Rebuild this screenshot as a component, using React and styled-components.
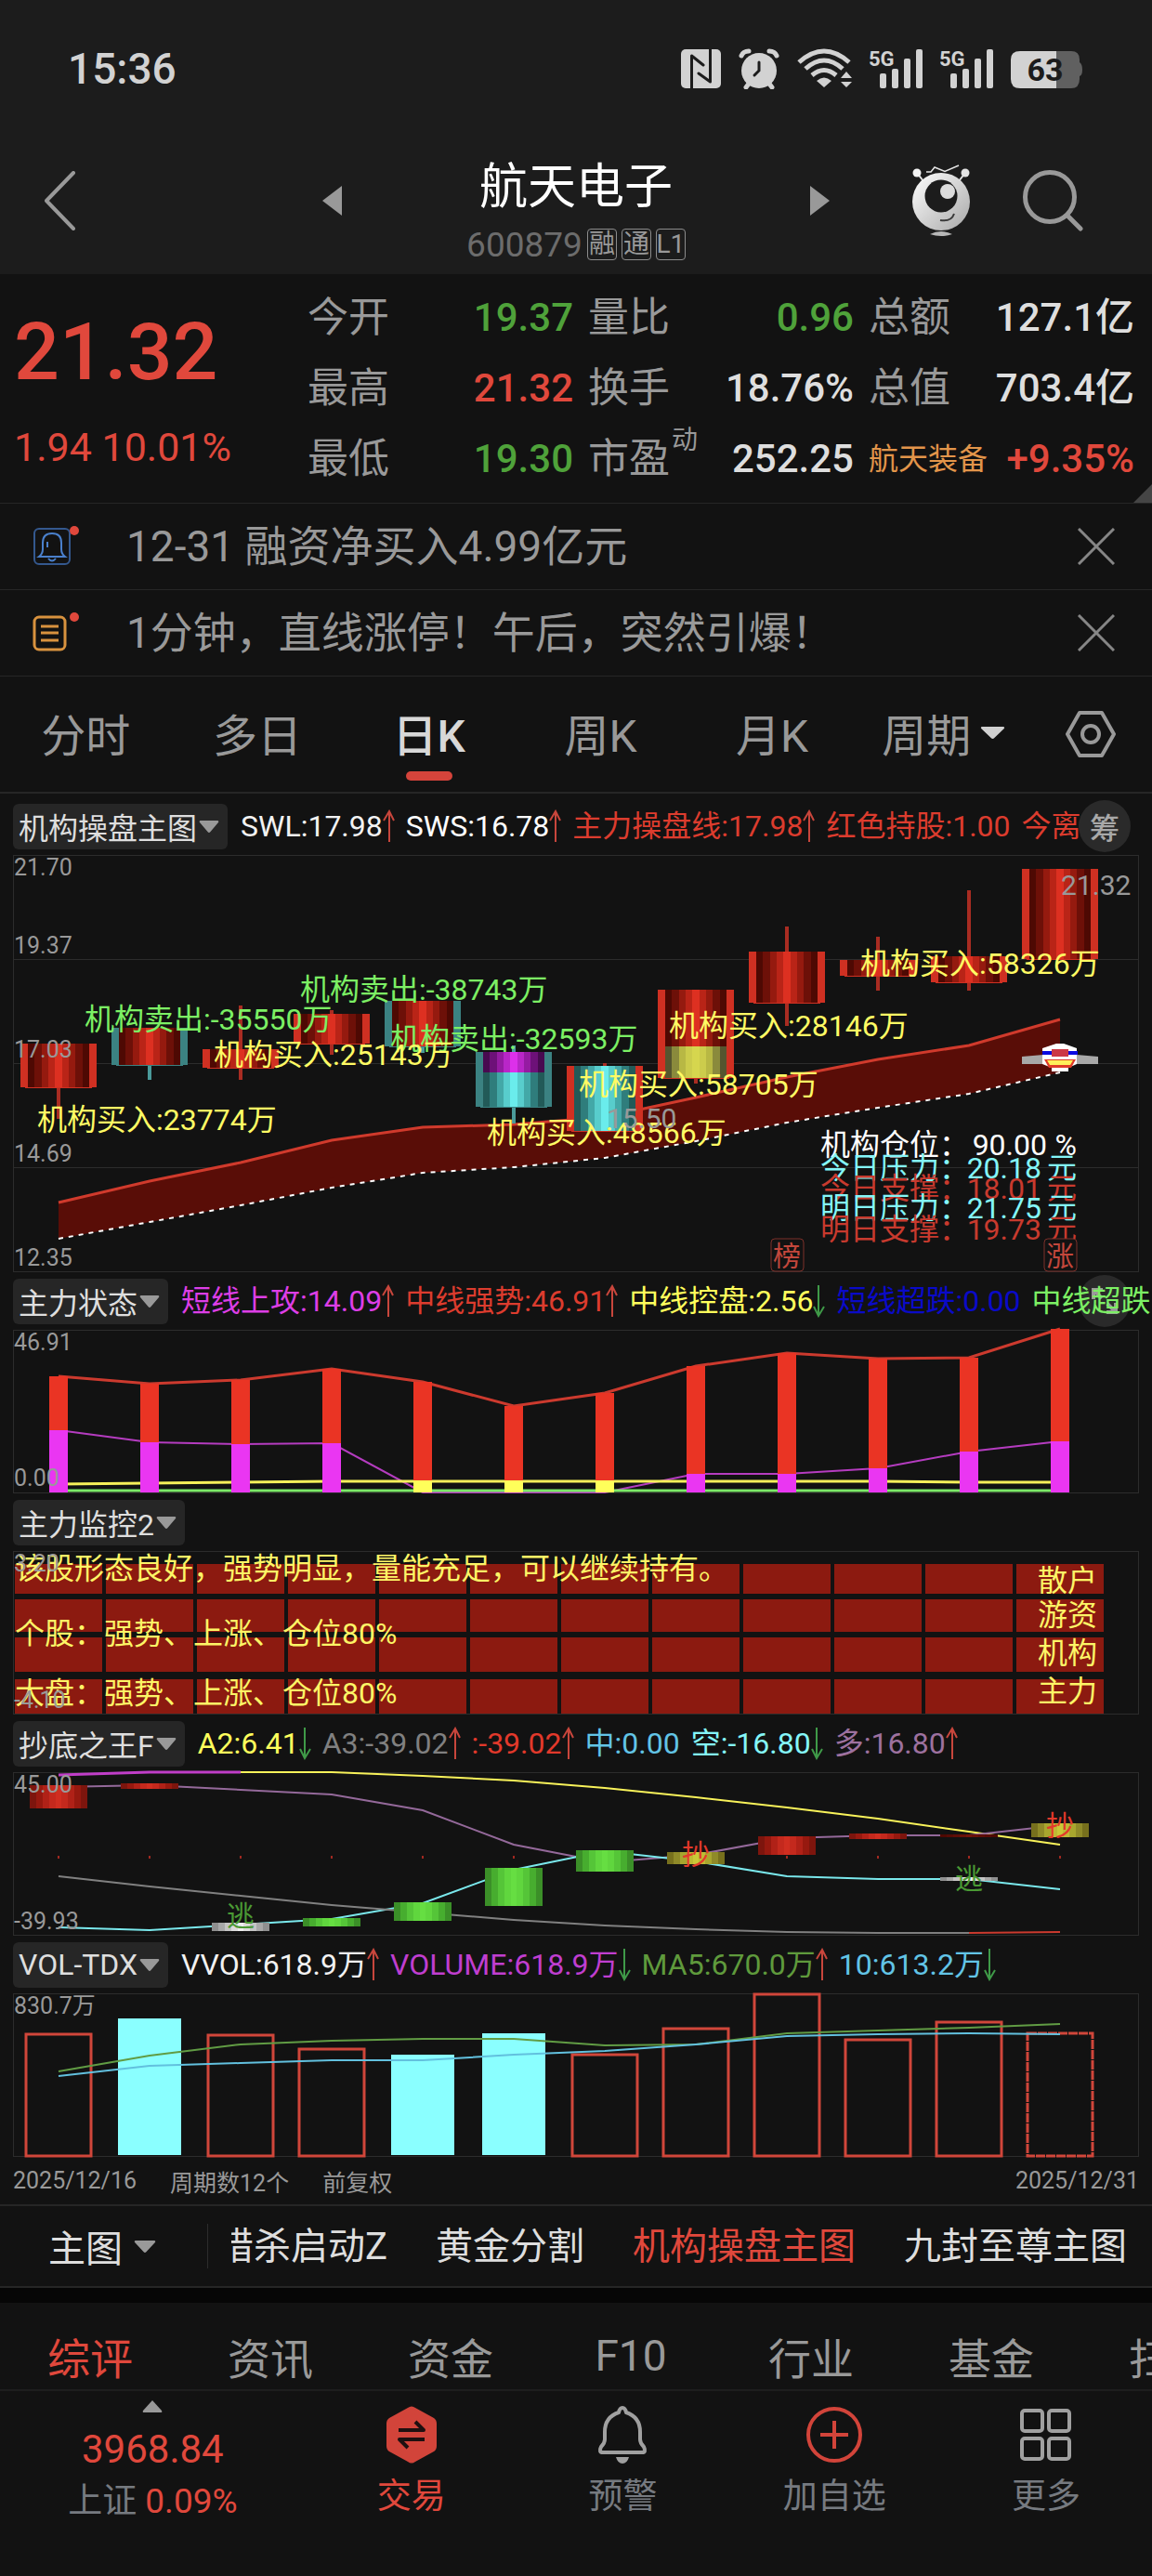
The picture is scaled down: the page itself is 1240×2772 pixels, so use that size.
import React from 'react'
import styled, { createGlobalStyle, css } from 'styled-components'

const RED = '#e0483c'
const GREEN = '#4fa23a'
const GREY = '#999999'
const WHITE = '#dedede'

// every chart shares the same twelve columns
const cx = (i) => 48 + 98 * i
const line = (ys, from = 0) => ys.map((y, i) => `${cx(i + from)},${y}`).join(' ')

const metrics = [
    { label: '今开', value: '19.37', color: GREEN },
    { label: '量比', value: '0.96', color: GREEN },
    { label: '总额', value: '127.1亿', color: WHITE },
    { label: '最高', value: '21.32', color: RED },
    { label: '换手', value: '18.76%', color: WHITE },
    { label: '总值', value: '703.4亿', color: WHITE },
    { label: '最低', value: '19.30', color: GREEN },
    { label: '市盈', sup: '动', value: '252.25', color: WHITE },
    { label: '航天装备', sector: true, value: '+9.35%', color: RED },
]

const legends = {
    main: [
        { text: 'SWL:17.98', color: '#f2f2f2', dir: 'up' },
        { text: 'SWS:16.78', color: '#ffffff', dir: 'up' },
        { text: '主力操盘线:17.98', color: '#dc3c2e', dir: 'up' },
        { text: '红色持股:1.00', color: '#dc3c2e' },
        { text: '今离', color: '#dc3c2e' },
    ],
    state: [
        { text: '短线上攻:14.09', color: '#dd3ee6', dir: 'up' },
        { text: '中线强势:46.91', color: '#dc3c2e', dir: 'up' },
        { text: '中线控盘:2.56', color: '#ffff5c', dir: 'down' },
        { text: '短线超跌:0.00', color: '#0a0ac8' },
        { text: '中线超跌:0.00', color: '#7cf064' },
    ],
    bottom: [
        { text: 'A2:6.41', color: '#ffff5c', dir: 'down' },
        { text: 'A3:-39.02', color: '#808080', dir: 'up' },
        { text: ':-39.02', color: '#e2392b', dir: 'up' },
        { text: '中:0.00', color: '#62c4e6' },
        { text: '空:-16.80', color: '#84f6f8', dir: 'down' },
        { text: '多:16.80', color: '#9d719f', dir: 'up' },
    ],
    vol: [
        { text: 'VVOL:618.9万', color: '#f2f2f2', dir: 'up' },
        { text: 'VOLUME:618.9万', color: '#c03ed0', dir: 'down' },
        { text: 'MA5:670.0万', color: '#5f9a3c', dir: 'up' },
        { text: '10:613.2万', color: '#62c4e6', dir: 'down' },
    ],
}

const ramps = {
    red: ['#4e0903', '#6d1008', '#951a0f', '#b92417', '#dd3021'],
    cyan: ['#225a58', '#2f7d7c', '#43a8a7', '#58cdcc', '#6aecec'],
    purple: ['#480a50', '#6d1178', '#951ba2', '#b926c8', '#dd30ea'],
    olive: ['#55552f', '#8a8a3c', '#b8b844', '#cccc4c', '#d6d64e'],
    ember: ['#7d150d', '#97190f', '#b02117', '#c4291d', '#d02e20'],
    maroon: ['#4e0903', '#560b05', '#5e0e07', '#681108', '#72140a'],
    green: ['#3b8f28', '#47ad2f', '#55c538', '#60d63e', '#66de42'],
    gold: ['#77701d', '#8f8a28', '#a8a62e', '#bdbb34', '#cac938'],
    silver: ['#8f8f8f', '#a8a8a8', '#c4c4c4', '#dcdcdc', '#eeeeee'],
}

const candles = [
    { body: [202, 249], wick: [249, 283] },
    { body: [185, 225], wick: [225, 241], cold: true },
    { body: [208, 228], wick: [161, 241] },
    { body: [170, 202], wick: [166, 214] },
    { body: [156, 205], wick: [205, 212], cold: true },
    { body: [211, 270], wick: [204, 288], cold: true, fill: 'cyan', part: ['purple', 211, 233] },
    { body: [226, 296], wick: [223, 226], fill: 'cyan' },
    { body: [144, 239], wick: [239, 245], part: ['olive', 205, 239] },
    { body: [103, 158], wick: [76, 183] },
    { body: [112, 129], wick: [87, 145] },
    { body: [108, 136], wick: [37, 145] },
    { body: [14, 111], wick: [111, 111] },
]

const trendTop = [373, 350, 330, 306, 292, 289, 281, 260, 238, 219, 204, 176]
const trendLow = [412, 394, 376, 357, 341, 335, 325, 307, 287, 271, 256, 233]

const flows = [
    [308, 155, '机构卖出:-38743万'],
    [76, 187, '机构卖出:-35550万'],
    [405, 208, '机构卖出:-32593万'],
    [25, 295, '机构买入:23774万'],
    [215, 225, '机构买入:25143万'],
    [509, 309, '机构买入:48566万'],
    [608, 257, '机构买入:58705万'],
    [705, 194, '机构买入:28146万'],
    [911, 127, '机构买入:58326万'],
]

const position = [
    ['机构仓位', '90.00', '%', '#ffffff', 322],
    ['今日压力', '20.18', '元', '#84f6f8', 347],
    ['今日支撑', '18.01', '元', '#c83a2e', 369],
    ['明日压力', '21.75', '元', '#84f6f8', 390],
    ['明日支撑', '19.73', '元', '#c83a2e', 413],
]

const strong = [49, 57, 53, 41, 55, 81, 67, 38, 24, 30, 29, -2]
const short = [107, 120, 122, 121, 174, 174, 174, 154, 154, 148, 130, 119]

const monitorRows = [[13, 32, '散户', 42], [51, 35, '游资', 79], [92, 37, '机构', 120], [137, 37, '主力', 161]]

const kingBars = [
    [0, 13, 38, 'ember'], [1, 11, 17, 'ember'], [2, 161, 170, 'silver'], [3, 156, 165, 'green'],
    [4, 139, 159, 'green'], [5, 102, 143, 'green'], [6, 83, 106, 'green'], [7, 85, 98, 'gold'],
    [8, 68, 88, 'ember'], [9, 65, 71, 'ember'], [10, 66, 69, 'maroon'], [10, 112, 116, 'silver'],
    [11, 54, 69, 'gold'],
]

const volumes = [42, 26, 43, 58, 65, 42, 64, 36, -1, 48, 29, 41]
const coldDays = [1, 4, 5]

const Ramps = () => (
    <svg width="0" height="0" style={{ position: 'absolute' }} aria-hidden="true">
        <defs>
            {Object.entries(ramps).map(([name, ramp]) => {
                const stripes = [...ramp, ...ramp.slice(0, 4).reverse()]
                return (
                    <linearGradient id={name} key={name}>
                        {stripes.map((color, i) => (
                            <React.Fragment key={i}>
                                <stop offset={i / 9} stopColor={color} />
                                <stop offset={(i + 1) / 9} stopColor={color} />
                            </React.Fragment>
                        ))}
                    </linearGradient>
                )
            })}
        </defs>
    </svg>
)

const Signal = () => (
    <svg width="57" height="44" viewBox="0 0 57 44" fill="#d2d2d2">
        <text x="-1" y="19" fontSize="22" fontWeight="700" fontFamily="Roboto">5G</text>
        <rect x="11" y="27" width="7" height="16" rx="2" />
        <rect x="24" y="22" width="7" height="21" rx="2" />
        <rect x="37" y="11" width="7" height="32" rx="2" />
        <rect x="50" y="1" width="7" height="42" rx="2" />
    </svg>
)

const StatusIcons = () => (
    <Icons>
        <svg width="43" height="44" viewBox="0 0 43 44">
            <rect x="0" y="1" width="43" height="42" rx="5" fill="#d2d2d2" />
            <g stroke="#1c1c1c" strokeWidth="3" fill="none" strokeLinecap="round" strokeLinejoin="round">
                <path d="M11.500 43V8L24 18M31.500 1V36L19 27" />
            </g>
        </svg>
        <svg width="44" height="44" viewBox="0 0 44 44">
            <g stroke="#d2d2d2" strokeWidth="5" strokeLinecap="round" fill="none">
                <path d="M3 8Q5 3 11 3M33 3Q39 3 41 8M11 38L8 42M33 38L36 42" />
            </g>
            <circle cx="22" cy="24" r="19" fill="#d2d2d2" />
            <path d="M22 15V24L17 29" stroke="#1c1c1c" strokeWidth="3" fill="none" strokeLinecap="round" />
        </svg>
        <svg width="59" height="44" viewBox="0 0 59 44">
            <g stroke="#d2d2d2" strokeWidth="5" fill="none">
                <path d="M2 15Q29 -9 56 15M9 22Q29 4 49 22M16 29Q29 18 42 29" />
            </g>
            <path d="M21 35Q29 28 37 35L29 42ZM47 32L53 25L59 32ZM47 36H59L53 42Z" fill="#d2d2d2" />
        </svg>
        <Signal />
        <Signal />
        <svg width="77" height="44" viewBox="0 0 77 44">
            <path d="M49 3H65Q74 3 74 12V15Q77 17 77 23T74 30V33Q74 43 65 43H49Z" fill="#606060" />
            <path d="M49 3H10Q0 3 0 12V33Q0 43 10 43H49Z" fill="#d2d2d2" />
            <text x="37" y="35" textAnchor="middle" fontSize="34" fontWeight="700" fontFamily="Roboto" fill="#1c1c1c">63</text>
        </svg>
    </Icons>
)

const Robot = () => (
    <svg width="62" height="78" viewBox="0 0 62 78">
        <defs>
            <linearGradient id="shell" x1="0" y1="0" x2="1" y2="1">
                <stop offset="0" stopColor="#ffffff" />
                <stop offset="1" stopColor="#a8a8a8" />
            </linearGradient>
        </defs>
        <g stroke="#e4e4e4" fill="none">
            <path d="M5 9L12 18M57 9L50 18" strokeWidth="2" />
            <path d="M15 8H20L24 3L35 7.500L50 1" strokeWidth="1.500" />
        </g>
        <circle cx="5" cy="9" r="4.500" fill="#f4f4f4" />
        <circle cx="57" cy="9" r="4.500" fill="#e4e4e4" />
        <circle cx="31" cy="40" r="31" fill="url(#shell)" />
        <circle cx="31" cy="34" r="17.500" fill="#1c1c1c" />
        <circle cx="38" cy="29" r="8" fill="#dcdcdc" />
        <path d="M30 60Q42 62 45 53" stroke="#3a3a3a" strokeWidth="2" fill="none" />
        <path d="M19 75Q31 69 43 75Q31 79 19 75Z" fill="#b8b8b8" />
    </svg>
)

const Arrow = ({ dir }) => (
    <svg width="13" height="36" viewBox="0 0 13 36" fill="none" stroke={dir === 'up' ? '#c8463c' : '#3f9a48'} strokeWidth="2">
        {dir === 'up' ? <path d="M7 35V3M1 12L7 2L12 12" /> : <path d="M6 1V33M1 24L6 34L12 24" />}
    </svg>
)

const Caret = ({ color = '#999999', width = 22 }) => (
    <svg width={width} height="13" viewBox="0 0 22 13" preserveAspectRatio="none">
        <path d="M2 0H20Q22 0 21 2L12.500 12Q11 14 9.500 12L1 2Q0 0 2 0Z" fill={color} />
    </svg>
)

const Legend = ({ items, clipped }) => (
    <Values $clipped={clipped}>
        {items.map((item) => (
            <Value key={item.text} $color={item.color}>
                {item.text}
                {item.dir && <Arrow dir={item.dir} />}
            </Value>
        ))}
    </Values>
)

const Plot = ({ height, scale, children }) => (
    <Frame>
        <svg viewBox={`0 0 1210 ${height}`}>
            {children}
            {scale.map(([text, y]) => (
                <text key={text} x="0" y={y} fontSize="25" fill="#999999">{text}</text>
            ))}
        </svg>
    </Frame>
)

const Candle = ({ i, body, wick, cold, fill = 'red', part }) => {
    const [top, bottom] = body
    const edge = cold ? '#3b8282' : '#cf3022'
    const thin = cold ? '#4a9a9a' : '#a92c22'
    return (
        <g>
            <rect x={cx(i) - 2} y={wick[0]} width="4" height={wick[1] - wick[0]} fill={thin} />
            <rect x={cx(i) - 41} y={top} width="82" height={bottom - top} fill={edge} />
            <rect x={cx(i) - 33} y={top} width="66" height={bottom - top} fill={`url(#${fill})`} />
            {part && <rect x={cx(i) - 33} y={part[1]} width="66" height={part[2] - part[1]} fill={`url(#${part[0]})`} />}
            <rect x={cx(i) - 36} y={bottom} width="72" height="1" fill={edge} />
        </g>
    )
}

const Ship = () => (
    <g>
        <path d="M1085 216L1108 214V224H1085ZM1167 216L1144 214V224H1167Z" fill="#a8a8a8" />
        <path d="M1107 207L1122 202H1130L1144 207V224L1135 228V232H1117V228L1107 224Z" fill="#ffffff" />
        <rect x="1107" y="210" width="38" height="4" fill="#0a0ae0" />
        <rect x="1117" y="208" width="18" height="8" fill="#cc3846" />
        <path d="M1109 219H1143L1138 228H1114Z" fill="#e03a28" />
        <path d="M1112 220H1140L1137 225H1115Z" fill="#fff05a" />
    </g>
)

const MainPlot = () => (
    <Plot height={447} scale={[['21.70', 21], ['19.37', 105], ['17.03', 217], ['14.69', 329], ['12.35', 441]]}>
        <path d="M0 111.500H1210M0 223.500H1210M0 335.500H1210" stroke="#2c2c2c" />
        <polygon points={`${line(trendTop)} ${line(trendLow).split(' ').reverse().join(' ')}`} fill="#590d07" />
        <polyline points={line(trendTop)} fill="none" stroke="#d03a2c" strokeWidth="3" />
        <polyline points={line(trendLow)} fill="none" stroke="#ffffff" strokeWidth="2" strokeDasharray="5 6" />
        {candles.map((c, i) => <Candle key={i} i={i} {...c} />)}
        <Ship />
        <g fontSize="32">
            {flows.map(([x, y, text]) => (
                <text key={text} x={x} y={y} fill={text.includes('卖出') ? '#7cf064' : '#fffb64'}>{text}</text>
            ))}
            {position.map(([label, value, unit, color, y]) => (
                <g key={label} fill={color}>
                    <text x="868" y={y}>{label}：</text>
                    <text x={unit === '%' ? 1112 : 1106} y={y} textAnchor="end">{value}</text>
                    <text x="1144" y={y} textAnchor="end">{unit}</text>
                </g>
            ))}
        </g>
        <g fontSize="30" fill="#999999">
            <text x="1127" y="42">21.32</text>
            <text x="638" y="293">15.50</text>
        </g>
        {[['榜', 832], ['涨', 1126]].map(([text, x]) => (
            <g key={text}>
                <rect x={x - 17} y="412" width="35" height="35" rx="4" fill="#121212" stroke="#7c302a" />
                <text x={x} y="441" fontSize="30" textAnchor="middle" fill="#c2473c">{text}</text>
            </g>
        ))}
    </Plot>
)

const StatePlot = () => (
    <Plot height={174} scale={[['46.91', 21], ['0.00', 167]]}>
        <g fill="none">
            <polyline points={line(strong)} stroke="#cc3a2e" strokeWidth="3" />
            <polyline points={line(short)} stroke="#b53cc0" strokeWidth="2" />
            <polyline points={line([165, 164, 163, 162, 162, 162, 162, 162, 162, 162, 163, 163])} stroke="#f6f05a" strokeWidth="3" />
            <polyline points={line(Array(12).fill(172))} stroke="#7ce868" strokeWidth="3" />
        </g>
        {strong.map((y, i) => (
            <g key={i}>
                <rect x={cx(i) - 10} y={y} width="20" height={174 - y} fill="#ea3424" />
                {short[i] < 174
                    ? <rect x={cx(i) - 10} y={short[i]} width="20" height={174 - short[i]} fill="#ea36f2" />
                    : <rect x={cx(i) - 10} y="161" width="20" height="13" fill="#ffff5a" />}
            </g>
        ))}
    </Plot>
)

const MonitorPlot = () => (
    <Plot height={174} scale={[['3.20', 21], ['-4.10', 168]]}>
        {monitorRows.map(([y, h, name, base]) => (
            <g key={name}>
                {candles.map((c, i) => <rect key={i} x={1 + 98 * i} y={y} width="94" height={h} fill="#8c1a10" />)}
                <text x="1102" y={base} fontSize="32" fill="#fdf566">{name}</text>
            </g>
        ))}
        <g fontSize="32" fill="#fdf566">
            <text x="1" y="29">该股形态良好，强势明显，量能充足，可以继续持有。</text>
            <text x="1" y="99">个股：强势、上涨、仓位80%</text>
            <text x="1" y="163">大盘：强势、上涨、仓位80%</text>
        </g>
    </Plot>
)

const KingPlot = () => (
    <Plot height={174} scale={[['45.00', 21], ['-39.93', 168]]}>
        <g fill="none" strokeWidth="2">
            <polyline points={line([-1, -1, 3, 8, 16, 26, 37, 49, 63, 77], 2)} stroke="#f8f25a" />
            <polyline points={line([2, -1, -1])} stroke="#c03ec8" strokeWidth="3" />
            <polyline points={line([15, 13, 18, 23, 40, 77, 96, 88, 70, 67, 67, 56])} stroke="#94699a" />
            <polyline points={line([166, 169, 163, 157, 140, 104, 84, 95, 111, 114, 114, 125])} stroke="#7ae8ec" />
            <polyline points={line([111, 122, 132, 142, 150, 158, 164, 168, 171, 172, 172])} stroke="#808080" />
            <polyline points={line([172, 171], 10)} stroke="#cc3a2e" />
        </g>
        {candles.map((c, i) => <rect key={i} x={cx(i) - 1} y="89" width="2" height="3" fill="#a02820" />)}
        {kingBars.map(([i, top, bottom, fill]) => (
            <rect key={`${i}${top}`} x={cx(i) - 31} y={top} width="62" height={bottom - top} fill={`url(#${fill})`} />
        ))}
        {[[2, 164, '逃'], [7, 98, '抄'], [10, 124, '逃'], [11, 67, '抄']].map(([i, y, text]) => (
            <text key={i} x={cx(i)} y={y} fontSize="30" textAnchor="middle" fill={text === '逃' ? '#4a9a34' : '#e2392b'}>{text}</text>
        ))}
    </Plot>
)

const VolumePlot = () => (
    <Plot height={174} scale={[['830.7万', 21]]}>
        {volumes.map((y, i) => coldDays.includes(i)
            ? <rect key={i} x={cx(i) - 34} y={y} width="68" height={173 - y} fill="#8affff" />
            : <rect key={i} x={cx(i) - 35} y={y + 1} width="70" height={173 - y} fill="none" stroke="#d0463a" strokeWidth="3"
                strokeDasharray={i === 11 ? '10 1' : undefined} />)}
        <g fill="none" strokeWidth="2">
            <polyline points={line([83, 66, 54, 50, 48, 48, 55, 54, 42, 39, 36, 32])} stroke="#619c44" />
            <polyline points={line([88, 77, 74, 71, 71, 65, 61, 54, 45, 43, 42, 43])} stroke="#62c0de" />
        </g>
    </Plot>
)

const App = () => {
    return (
        <Page>
            <GlobalStyle />
            <Ramps />
            <Header>
                <StatusBar>
                    <time>15:36</time>
                    <StatusIcons />
                </StatusBar>
                <TitleBar>
                    <IconButton aria-label="返回">
                        <svg width="34" height="64" viewBox="0 0 34 64" fill="none" stroke={GREY} strokeWidth="4" strokeLinecap="round" strokeLinejoin="round">
                            <path d="M31 2L2 32L31 62" />
                        </svg>
                    </IconButton>
                    <Stock>
                        <IconButton aria-label="上一只">
                            <svg width="21" height="32" viewBox="0 0 21 32"><path d="M21 0V32L0 16Z" fill={GREY} /></svg>
                        </IconButton>
                        <Name>
                            <h1>航天电子</h1>
                            <Code>
                                600879
                                <Tag>融</Tag>
                                <Tag>通</Tag>
                                <Tag>L1</Tag>
                            </Code>
                        </Name>
                        <IconButton aria-label="下一只">
                            <svg width="21" height="32" viewBox="0 0 21 32"><path d="M0 0V32L21 16Z" fill={GREY} /></svg>
                        </IconButton>
                    </Stock>
                    <Tools>
                        <IconButton aria-label="智能助手"><Robot /></IconButton>
                        <IconButton aria-label="搜索">
                            <svg width="65" height="66" viewBox="0 0 65 66" fill="none" stroke={GREY}>
                                <circle cx="29" cy="29" r="26.500" strokeWidth="5" />
                                <path d="M49 50L62 63" strokeWidth="5" strokeLinecap="round" />
                            </svg>
                        </IconButton>
                    </Tools>
                </TitleBar>
            </Header>

            <Quote>
                <Price>
                    <strong>21.32</strong>
                    <span>1.94 10.01%</span>
                </Price>
                <Metrics>
                    {metrics.map((m) => (
                        <Metric key={m.label}>
                            <MetricLabel $sector={m.sector}>{m.label}{m.sup && <sup>{m.sup}</sup>}</MetricLabel>
                            <MetricValue $color={m.color}>{m.value}</MetricValue>
                        </Metric>
                    ))}
                </Metrics>
                <Corner />
            </Quote>

            <Notice>
                <svg width="52" height="46" viewBox="0 0 52 46" fill="none" stroke="#4a80cc" strokeWidth="2">
                    <rect x="2" y="4" width="38" height="38" rx="5" stroke="#34588e" />
                    <path d="M7 34Q11 31 11 26V19Q11 9 21 9T31 19V26Q31 31 35 34ZM17 36Q21 41 25 36M16 18V24" />
                    <circle cx="45" cy="6" r="5" fill="#e0483c" stroke="none" />
                </svg>
                <p>12-31 融资净买入4.99亿元</p>
                <CloseButton />
            </Notice>
            <Notice>
                <svg width="52" height="46" viewBox="0 0 52 46" fill="none" stroke="#d8923e" strokeWidth="3">
                    <rect x="2" y="6" width="33" height="35" rx="5" />
                    <path d="M9 16H28M9 23H28M9 31H28" />
                    <circle cx="45" cy="6" r="5" fill="#e0483c" stroke="none" />
                </svg>
                <p>1分钟，直线涨停！午后，突然引爆！</p>
                <CloseButton />
            </Notice>

            <Periods>
                <Period>分时</Period>
                <Period>多日</Period>
                <Period $active>日K</Period>
                <Period>周K</Period>
                <Period>月K</Period>
                <Period>周期<Caret color="#d0d0d0" width={27} /></Period>
                <IconButton aria-label="设置">
                    <svg width="54" height="50" viewBox="0 0 54 50" fill="none" stroke={GREY} strokeWidth="4" strokeLinejoin="round">
                        <path d="M15 2H39L52 25L39 48H15L2 25Z" />
                        <circle cx="27" cy="25" r="9" />
                    </svg>
                </IconButton>
            </Periods>

            <Charts>
                <ChartHead>
                    <Picker>机构操盘主图<Caret /></Picker>
                    <Legend items={legends.main} clipped />
                    <Round>筹</Round>
                </ChartHead>
                <MainPlot />
                <ChartHead>
                    <Picker>主力状态<Caret /></Picker>
                    <Legend items={legends.state} />
                    <Round aria-label="展开">
                        <svg width="28" height="28" viewBox="0 0 28 28" fill="none" stroke="#9a9a9a" strokeWidth="4">
                            <path d="M2 12V2H12M2 2L11 11M26 16V26H16M26 26L17 17" />
                        </svg>
                    </Round>
                </ChartHead>
                <StatePlot />
                <ChartHead>
                    <Picker>主力监控2<Caret /></Picker>
                </ChartHead>
                <MonitorPlot />
                <ChartHead>
                    <Picker>抄底之王F<Caret /></Picker>
                    <Legend items={legends.bottom} />
                </ChartHead>
                <KingPlot />
                <ChartHead>
                    <Picker>VOL-TDX<Caret /></Picker>
                    <Legend items={legends.vol} />
                </ChartHead>
                <VolumePlot />
                <Dates>
                    <span>2025/12/16</span>
                    <span>周期数12个</span>
                    <span>前复权</span>
                    <span>2025/12/31</span>
                </Dates>
            </Charts>

            <Strategies>
                <StrategyMenu>主图<Caret width={24} /></StrategyMenu>
                <StrategyList>
                    <Strategy>猎杀启动Z</Strategy>
                    <Strategy>黄金分割</Strategy>
                    <Strategy $active>机构操盘主图</Strategy>
                    <Strategy>九封至尊主图</Strategy>
                </StrategyList>
            </Strategies>

            <Sections>
                {['综评', '资讯', '资金', 'F10', '行业', '基金', '扫雷'].map((name, i) => (
                    <Section key={name} $active={i === 0}>{name}</Section>
                ))}
            </Sections>

            <BottomNav>
                <IndexButton>
                    <svg width="22" height="13" viewBox="0 0 22 13"><path d="M11 0L21 11Q22 13 20 13H2Q0 13 1 11Z" fill={GREY} /></svg>
                    <strong>3968.84</strong>
                    <span>上证 <em>0.09%</em></span>
                </IndexButton>
                <NavButton $active>
                    <svg width="62" height="62" viewBox="0 0 62 62">
                        <path d="M27 2Q31 -1 35 2L55 13Q58 15 58 19V43Q58 47 55 49L35 60Q31 63 27 60L7 49Q4 47 4 43V19Q4 15 7 13Z" fill="#d2443a" />
                        <path d="M17 26H44L35 17M45 36H18L27 45" fill="none" stroke="#1e1010" strokeWidth="4" strokeLinejoin="round" />
                    </svg>
                    交易
                </NavButton>
                <NavButton>
                    <svg width="62" height="62" viewBox="0 0 62 62" fill="none" stroke="#a0a0a0" strokeWidth="4" strokeLinejoin="round">
                        <path d="M31 2Q28 2 27 7Q12 12 12 28V36Q12 40 8 44Q5 50 10 50H52Q57 50 54 44Q50 40 50 36V28Q50 12 35 7Q34 2 31 2Z" />
                        <path d="M24 55H38Q36 62 31 62T24 55Z" fill="#a0a0a0" stroke="none" />
                    </svg>
                    预警
                </NavButton>
                <NavButton>
                    <svg width="62" height="62" viewBox="0 0 62 62" fill="none" stroke="#d2443a" strokeWidth="4">
                        <circle cx="31" cy="31" r="28" />
                        <path d="M31 16V46M16 31H46" />
                    </svg>
                    加自选
                </NavButton>
                <NavButton>
                    <svg width="62" height="62" viewBox="0 0 62 62" fill="none" stroke="#a0a0a0" strokeWidth="4">
                        <rect x="5" y="5" width="22" height="22" rx="3" />
                        <rect x="34" y="5" width="22" height="22" rx="3" />
                        <rect x="5" y="35" width="22" height="22" rx="3" />
                        <rect x="34" y="35" width="22" height="22" rx="3" />
                    </svg>
                    更多
                </NavButton>
            </BottomNav>
        </Page>
    )
}

const CloseButton = () => (
    <IconButton aria-label="关闭">
        <svg width="40" height="40" viewBox="0 0 40 40" stroke="#868686" strokeWidth="3">
            <path d="M1 1L39 39M39 1L1 39" />
        </svg>
    </IconButton>
)

const GlobalStyle = createGlobalStyle`
    * {
        box-sizing: border-box;
    }

    body {
        margin: 0;
        background: #121212;
    }

    button {
        padding: 0;
        border: 0;
        background: none;
        color: inherit;
        font: inherit;
        white-space: nowrap;
        cursor: pointer;
    }

    svg {
        display: block;
        flex: none;
    }
`

const Page = styled.div`
    min-height: 100vh;
    overflow: hidden;
    background: #121212;
    color: ${GREY};
    font-family: Roboto, 'Noto Sans CJK SC', sans-serif;
`

const Header = styled.header`
    padding-bottom: 11px;
    background: #1c1c1c;
`

const StatusBar = styled.div`
    display: flex;
    align-items: center;
    justify-content: space-between;
    height: 148px;
    padding: 0 75px 0 73px;
    color: #d2d2d2;
    font-size: 46px;
    font-weight: 500;
`

const Icons = styled.div`
    display: flex;
    gap: 19px;
`

const TitleBar = styled.div`
    display: grid;
    grid-template-columns: 1fr 546px 1fr;
    align-items: center;
    height: 136px;

    > button {
        justify-self: start;
        padding-left: 48px;
    }
`

const Stock = styled.div`
    display: flex;
    align-items: center;
    justify-content: space-between;
`

const Name = styled.div`
    padding-top: 18px;
    text-align: center;

    h1 {
        margin: 0 0 12px;
        color: #ffffff;
        font-size: 52px;
        font-weight: 400;
        line-height: 64px;
    }
`

const Code = styled.div`
    display: flex;
    align-items: center;
    justify-content: center;
    gap: 5px;
    height: 34px;
    color: #6c6c6c;
    font-size: 37px;
`

const Tag = styled.span`
    display: flex;
    justify-content: center;
    width: 32px;
    height: 34px;
    border: 1px solid #8c8c8c;
    border-radius: 4px;
    color: ${GREY};
    font-size: 28px;
    line-height: 32px;
`

const Tools = styled.div`
    display: flex;
    align-items: center;
    justify-content: flex-end;
    gap: 57px;
    padding-right: 74px;
`

const IconButton = styled.button`
    display: flex;
    align-items: center;
    justify-content: center;
`

const Quote = styled.section`
    position: relative;
    display: grid;
    grid-template-columns: 316fr 890fr;
    padding: 9px 19px 9px 15px;
    border-bottom: 1px solid #262626;
`

const Price = styled.div`
    display: flex;
    flex-direction: column;
    gap: 32px;
    padding-top: 29px;
    color: ${RED};

    strong {
        font-size: 86px;
        font-weight: 500;
        line-height: 92px;
    }

    span {
        font-size: 43px;
        line-height: 48px;
    }
`

const Metrics = styled.div`
    display: grid;
    grid-template-columns: repeat(3, 1fr);
    grid-auto-rows: 76px;
    column-gap: 16px;
`

const Metric = styled.div`
    display: flex;
    align-items: center;
    justify-content: space-between;
    white-space: nowrap;
`

const MetricLabel = styled.span`
    display: flex;
    font-size: 44px;
    line-height: 64px;

    ${(props) => props.$sector && css`
        color: #e2954a;
        font-size: 32px;
    `}

    sup {
        padding-left: 2px;
        font-size: 28px;
        line-height: 24px;
    }
`

const MetricValue = styled.span`
    color: ${(props) => props.$color};
    font-size: 42px;
    font-weight: 500;
    line-height: 64px;
`

const Corner = styled.i`
    position: absolute;
    right: 0;
    bottom: 0;
    border-bottom: 20px solid #454545;
    border-left: 20px solid transparent;
`

const Notice = styled.div`
    display: grid;
    grid-template-columns: 101px 1fr 40px;
    align-items: center;
    height: 93px;
    padding: 0 40px 0 35px;
    border-bottom: 1px solid #262626;

    p {
        margin: 0;
        font-size: 46px;
        line-height: 64px;
    }
`

const Periods = styled.nav`
    display: grid;
    grid-template-columns: repeat(6, 185fr) 132fr;
    height: 126px;
    border-bottom: 2px solid #262626;
`

const Period = styled.button`
    position: relative;
    display: flex;
    align-items: center;
    justify-content: center;
    gap: 10px;
    padding-bottom: 4px;
    font-size: 48px;

    ${(props) => props.$active && css`
        color: #d8d8d8;
        font-weight: 500;

        &::after {
            content: '';
            position: absolute;
            bottom: 12px;
            width: 50px;
            height: 10px;
            border-radius: 5px;
            background: #d5443b;
        }
    `}
`

const Charts = styled.section`
    padding: 4px 14px 0;
    border-bottom: 2px solid #262626;
`

const ChartHead = styled.div`
    position: relative;
    display: flex;
    align-items: center;
    gap: 14px;
    height: 62px;
    margin-right: -14px;
`

const Picker = styled.button`
    display: flex;
    flex: none;
    align-items: center;
    gap: 2px;
    height: 49px;
    padding: 0 9px 0 6px;
    border-radius: 6px;
    background: #262626;
    color: ${WHITE};
    font-size: 32px;
`

const Values = styled.div`
    position: relative;
    z-index: 1;
    display: flex;
    flex: 1;
    gap: 12px;
    min-width: 0;
    margin-right: ${(props) => (props.$clipped ? '78px' : '0')};
    overflow: hidden;
`

const Value = styled.span`
    display: flex;
    flex: none;
    align-items: center;
    color: ${(props) => props.$color};
    font-size: 32px;
    line-height: 48px;
`

const Round = styled.button`
    position: absolute;
    right: 23px;
    display: flex;
    align-items: center;
    justify-content: center;
    width: 56px;
    height: 56px;
    border-radius: 50%;
    background: #2a2a2a;
    color: #a8a8a8;
    font-size: 32px;
    font-weight: 500;
`

const Frame = styled.div`
    border: 1px solid #2c2c2c;

    svg {
        width: 100%;
        overflow: visible;
    }
`

const Dates = styled.div`
    display: flex;
    align-items: center;
    gap: 36px;
    height: 51px;
    font-size: 25px;

    span:last-child {
        margin-left: auto;
    }
`

const Strategies = styled.div`
    display: flex;
    align-items: center;
    height: 88px;
    border-bottom: 2px solid #262626;
    color: ${WHITE};
    font-size: 40px;
`

const StrategyMenu = styled.button`
    display: flex;
    flex: none;
    align-items: center;
    gap: 12px;
    width: 224px;
    height: 48px;
    padding-left: 52px;
    border-right: 1px solid #2c2c2c;
`

const StrategyList = styled.div`
    display: flex;
    flex: 1;
    gap: 52px;
    margin-left: 25px;
    padding-top: 2px;
    overflow: hidden;

    /* the list is scrolled a little to the right */
    > :first-child {
        margin-left: -16px;
    }
`

const Strategy = styled.button`
    flex: none;
    line-height: 56px;
    color: ${(props) => (props.$active ? RED : WHITE)};
`

const Sections = styled.nav`
    display: grid;
    grid-auto-columns: 194px;
    grid-auto-flow: column;
    height: 111px;
    padding-top: 20px;
    overflow: hidden;
    border-top: 16px solid #060606;
    border-bottom: 2px solid #1e1e1e;
`

const Section = styled.button`
    color: ${(props) => (props.$active ? RED : GREY)};
    font-size: 46px;
`

const BottomNav = styled.nav`
    display: grid;
    grid-template-columns: 329fr repeat(4, 228fr);
    padding-bottom: 40px;
`

const IndexButton = styled.button`
    display: flex;
    flex-direction: column;
    align-items: center;
    padding-top: 10px;
    color: ${RED};

    strong {
        margin-top: 16px;
        font-size: 42px;
        font-weight: 400;
        line-height: 48px;
    }

    span {
        margin-top: 6px;
        color: #767a80;
        font-size: 37px;
        line-height: 52px;
    }

    em {
        color: ${RED};
        font-style: normal;
    }
`

const NavButton = styled.button`
    display: flex;
    flex-direction: column;
    align-items: center;
    gap: 10px;
    padding-top: 16px;
    color: ${(props) => (props.$active ? RED : '#767a80')};
    font-size: 37px;
    line-height: 52px;
`

export default App
